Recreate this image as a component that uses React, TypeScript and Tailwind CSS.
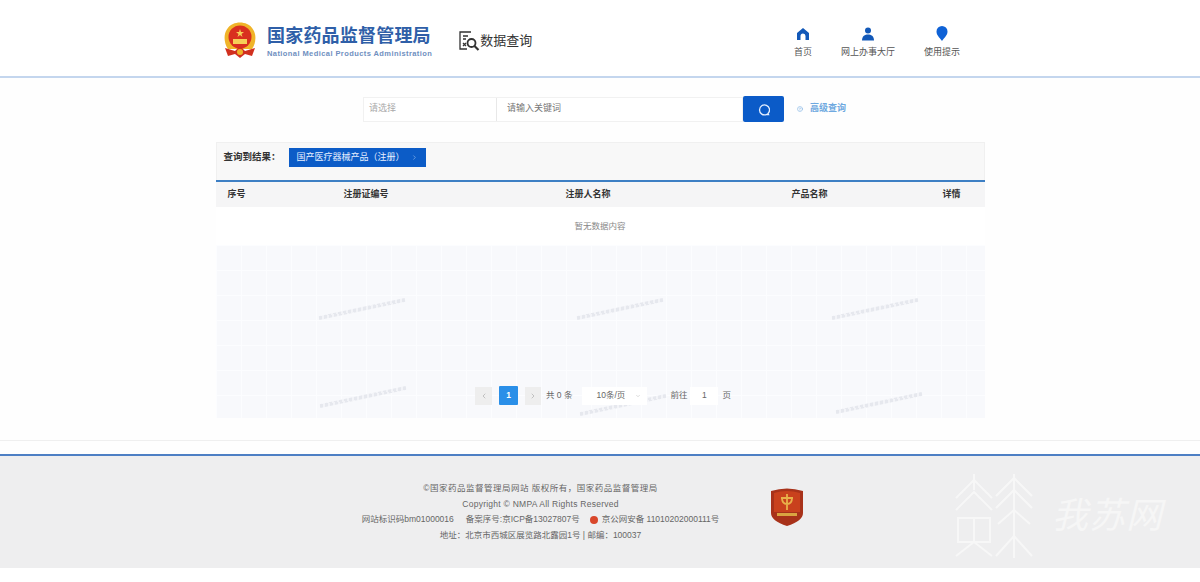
import { ChevronLeft, ChevronRight, ChevronDown, HelpCircle } from 'lucide-react';

const FONT = "font-['Liberation_Sans','Noto_Sans_CJK_SC',sans-serif]";

const Emblem = () => (
  <svg width="34" height="36" viewBox="0 0 34 36" className="shrink-0">
    <path d="M5 27 C-1 18 1 6 10 2 C14 0 20 0 24 2 C33 6 35 18 29 27 Z" fill="#f0b429" />
    <circle cx="17" cy="15" r="11.5" fill="#d92f1f" />
    <path d="M17 7l1 3h3l-2.500 2 1 3-2.500-2-2.500 2 1-3-2.500-2h3z" fill="#f6cf57" />
    <rect x="10" y="17" width="14" height="5" fill="#f6cf57" />
    <path d="M2 26 L12 29 L17 24 L22 29 L32 26 L29 34 L22 32 L17 36 L12 32 L5 34 Z" fill="#d1301f" />
    <circle cx="17" cy="30" r="3" fill="#f0b429" />
  </svg>
);

const DataIcon = () => (
  <svg width="22" height="22" viewBox="0 0 22 22" fill="none" stroke="#333" strokeWidth="1.300">
    <path d="M13 2H2v17h7" />
    <path d="M5 6h5M5 9h3M5 13l3 3M8 13l-3 3" />
    <circle cx="13.500" cy="13" r="4" strokeWidth="1.800" />
    <path d="M16.500 16l4 4" strokeWidth="2.200" />
  </svg>
);

const HomeIcon = () => (
  <svg width="14" height="14" viewBox="0 0 14 14" fill="#1258b8">
    <path d="M7 1 L13 6 V13 H9.500 V9 A2.500 2.500 0 0 0 4.500 9 V13 H1 V6 Z" />
  </svg>
);

const UserIcon = () => (
  <svg width="14" height="14" viewBox="0 0 14 14" fill="#1258b8">
    <circle cx="7" cy="3.500" r="3" />
    <path d="M1 13.500 C1 9 4 7.500 7 7.500 C10 7.500 13 9 13 13.500 Z" />
  </svg>
);

const PinIcon = () => (
  <svg width="14" height="15" viewBox="0 0 14 15" fill="#0f62d6">
    <path d="M7 15 C4 11 1.500 9 1.500 5.500 A5.500 5.500 0 0 1 12.500 5.500 C12.500 9 10 11 7 15 Z" />
  </svg>
);

const Badge = () => (
  <svg width="34" height="40" viewBox="0 0 34 40" className="mb-[11px] shrink-0">
    <path d="M1 4 Q17 -1 33 4 V26 Q33 34 17 39 Q1 34 1 26 Z" fill="#a8321a" />
    <path d="M4 6 Q17 2 30 6 V25 H4 Z" fill="#c9411d" />
    <path d="M17 7v16M11 11h12M12 11q0 6 5 6t5-6" stroke="#e8b04a" strokeWidth="1.800" fill="none" />
    <rect x="7" y="26" width="20" height="3" fill="#d9a441" />
  </svg>
);

const Snowflake = () => (
  <svg width="80" height="88" viewBox="0 0 80 88" fill="none" stroke="#f7f7f7" strokeWidth="2">
    <path d="M20 2v16M2 26L20 8l18 18M2 38L20 20l18 18" />
    <path d="M60 2v84M42 24L60 6l18 18M42 36L60 18l18 18M44 52L60 38l16 14M42 84L60 64l18 20" />
    <path d="M4 46h32v24H4zM20 46v24M2 84l18-14 18 14" />
  </svg>
);

const Watermark = ({ className }: { className: string }) => (
  <div className={`absolute h-[4px] w-[88px] -rotate-[12deg] bg-[repeating-linear-gradient(90deg,#e6e8ee_0_3px,#f3f4f8_3px_5px)] ${className}`} />
);

const NavItem = ({ icon, label }: { icon: React.ReactNode; label: string }) => (
  <div className="flex flex-col items-center gap-[5px]">
    {icon}
    <span className="text-[9px] leading-[12px] text-[#555]">{label}</span>
  </div>
);

export default function App() {
  return (
    <div className={`${FONT} flex h-[582px] w-[1200px] flex-col overflow-hidden bg-[#fefefe]`}>
      <header className="h-[78px] shrink-0 border-b-2 border-[#c4d6ee] bg-white">
        <div className="mx-auto flex h-full w-[770px] items-center pl-[8px] pt-[4px]">
          <Emblem />
          <div className="ml-[10px] flex flex-col">
            <span className="whitespace-nowrap text-[18px] font-bold leading-[26px] tracking-[0.2px] text-[#2f5fa8]">国家药品监督管理局</span>
            <span className="whitespace-nowrap text-[7.500px] font-bold leading-[9px] tracking-[0.42px] text-[#6f8fc0]">National Medical Products Administration</span>
          </div>
          <div className="ml-[26px] mt-[2px] flex items-center">
            <DataIcon />
            <span className="text-[13px] text-[#333]">数据查询</span>
          </div>
          <div className="ml-auto flex items-center gap-[29px] pr-[25px] pt-[4px]">
            <NavItem icon={<HomeIcon />} label="首页" />
            <NavItem icon={<UserIcon />} label="网上办事大厅" />
            <NavItem icon={<PinIcon />} label="使用提示" />
          </div>
        </div>
      </header>

      <main className="h-[363px] shrink-0 border-b border-[#efefef]">
        <div className="mb-[2px] flex h-[62px] items-center justify-center pl-[9px]">
          <div className="flex h-[25px] w-[380px] items-center border border-[#f1f1f1] bg-white text-[9px]">
            <div className="flex h-full w-[133px] items-center border-r border-[#e8e8e8] pl-[5px] text-[#aaa]">请选择</div>
            <div className="pl-[10px] text-[#777]">请输入关键词</div>
          </div>
          <div className="flex h-[26px] w-[41px] items-center justify-center rounded-[2px] bg-[#0b5bc8]">
            <svg width="13" height="13" viewBox="0 0 13 13" fill="none" stroke="#e6f0ff" strokeWidth="1.300">
              <path d="M11 10.500 A5 5 0 1 0 9.500 11.500 L11.500 11.500 Z" />
            </svg>
          </div>
          <div className="ml-[13px] flex items-center gap-[7px] text-[9px] font-bold text-[#6fa9e0]">
            <HelpCircle size={6} strokeWidth={2} />
            <span>高级查询</span>
          </div>
        </div>

        <section className="mx-auto h-[276px] w-[769px] bg-[#f8f9fc]">
          <div className="flex h-[38px] items-start border border-b-0 border-[#f0f0f0] bg-[#f8f8f8] pl-[7px] pt-[5px]">
            <span className="mt-[2px] text-[9.500px] font-bold leading-[14px] text-[#333]">查询到结果：</span>
            <div className="ml-[8px] flex h-[19px] w-[137px] items-center bg-[#0c5cc7] pl-[8px] text-[9px] text-[#e8f0ff]">
              <span className="whitespace-nowrap">国产医疗器械产品（注册）</span>
              <ChevronRight size={7} className="ml-[6px] text-[#9dc1f0]" />
            </div>
          </div>
          <div className="grid h-[27px] grid-cols-[116px_222px_226px_151px_1fr] items-center border-t-2 border-[#3d7fc4] bg-[#f5f5f6] pl-[12px] text-[9px] font-bold text-[#333]">
            <span>序号</span>
            <span>注册证编号</span>
            <span>注册人名称</span>
            <span>产品名称</span>
            <span>详情</span>
          </div>
          <div className="flex h-[38px] items-center justify-center bg-white text-[8.500px] text-[#888]">暂无数据内容</div>
          <div className="relative flex h-[173px] items-end justify-center bg-[#f8f9fc] bg-[linear-gradient(#fcfdff_1px,transparent_1px),linear-gradient(90deg,#fcfdff_1px,transparent_1px)] bg-[size:25px_25px] pb-[13px] pl-[6px]">
            <Watermark className="left-[102px] top-[62px]" />
            <Watermark className="left-[103px] top-[150px]" />
            <Watermark className="left-[360px] top-[62px]" />
            <Watermark className="left-[363px] top-[158px]" />
            <Watermark className="left-[615px] top-[62px]" />
            <Watermark className="left-[619px] top-[156px]" />
            <div className="relative flex items-center text-[8.500px] text-[#666]">
              <div className="flex h-[18px] w-[17px] items-center justify-center bg-[#eeeeee] text-[#aaa]"><ChevronLeft size={8} /></div>
              <div className="ml-[7px] flex h-[19px] w-[19px] items-center justify-center rounded-[1px] bg-[#2a8fe8] font-bold text-white">1</div>
              <div className="ml-[7px] flex h-[18px] w-[16px] items-center justify-center bg-[#eeeeee] text-[#aaa]"><ChevronRight size={8} /></div>
              <span className="ml-[5px] whitespace-nowrap">共 0 条</span>
              <div className="ml-[10px] flex h-[18px] w-[65px] items-center justify-between bg-white pl-[14px] pr-[6px]">
                <span>10条/页</span>
                <ChevronDown size={6} className="text-[#bbb]" />
              </div>
              <span className="ml-[23px] whitespace-nowrap">前往</span>
              <div className="ml-[3px] flex h-[18px] w-[28px] items-center justify-center bg-white">1</div>
              <span className="ml-[4px]">页</span>
            </div>
          </div>
        </section>
      </main>

      <div className="h-[13px] shrink-0" />

      <footer className="relative flex h-[114px] shrink-0 items-center justify-center border-t-2 border-[#4d7fc4] bg-[#eeeeef]">
        <div className="mr-[51px] ml-[-34px] flex flex-col items-center text-[8.500px] leading-[15.500px] text-[#666]">
          <span className="tracking-[0.5px]">©国家药品监督管理局网站 版权所有，国家药品监督管理局</span>
          <span className="tracking-[0.25px]">Copyright © NMPA All Rights Reserved</span>
          <span className="flex items-center whitespace-nowrap">
            网站标识码bm01000016<span className="ml-[12px]">备案序号:京ICP备13027807号</span>
            <span className="ml-[10px] mr-[4px] h-[8px] w-[8px] rounded-full bg-[#d9472b]" />
            京公网安备 11010202000111号
          </span>
          <span>地址：北京市西城区展览路北露园1号 | 邮编：100037</span>
        </div>
        <Badge />
        <div className="absolute left-[954px] top-[16px] flex items-center gap-[18px]">
          <Snowflake />
          <span className="text-[36px] italic tracking-[1px] text-[#f6f6f6]">我苏网</span>
        </div>
      </footer>

      <div className="flex-1 bg-white" />
    </div>
  );
}
